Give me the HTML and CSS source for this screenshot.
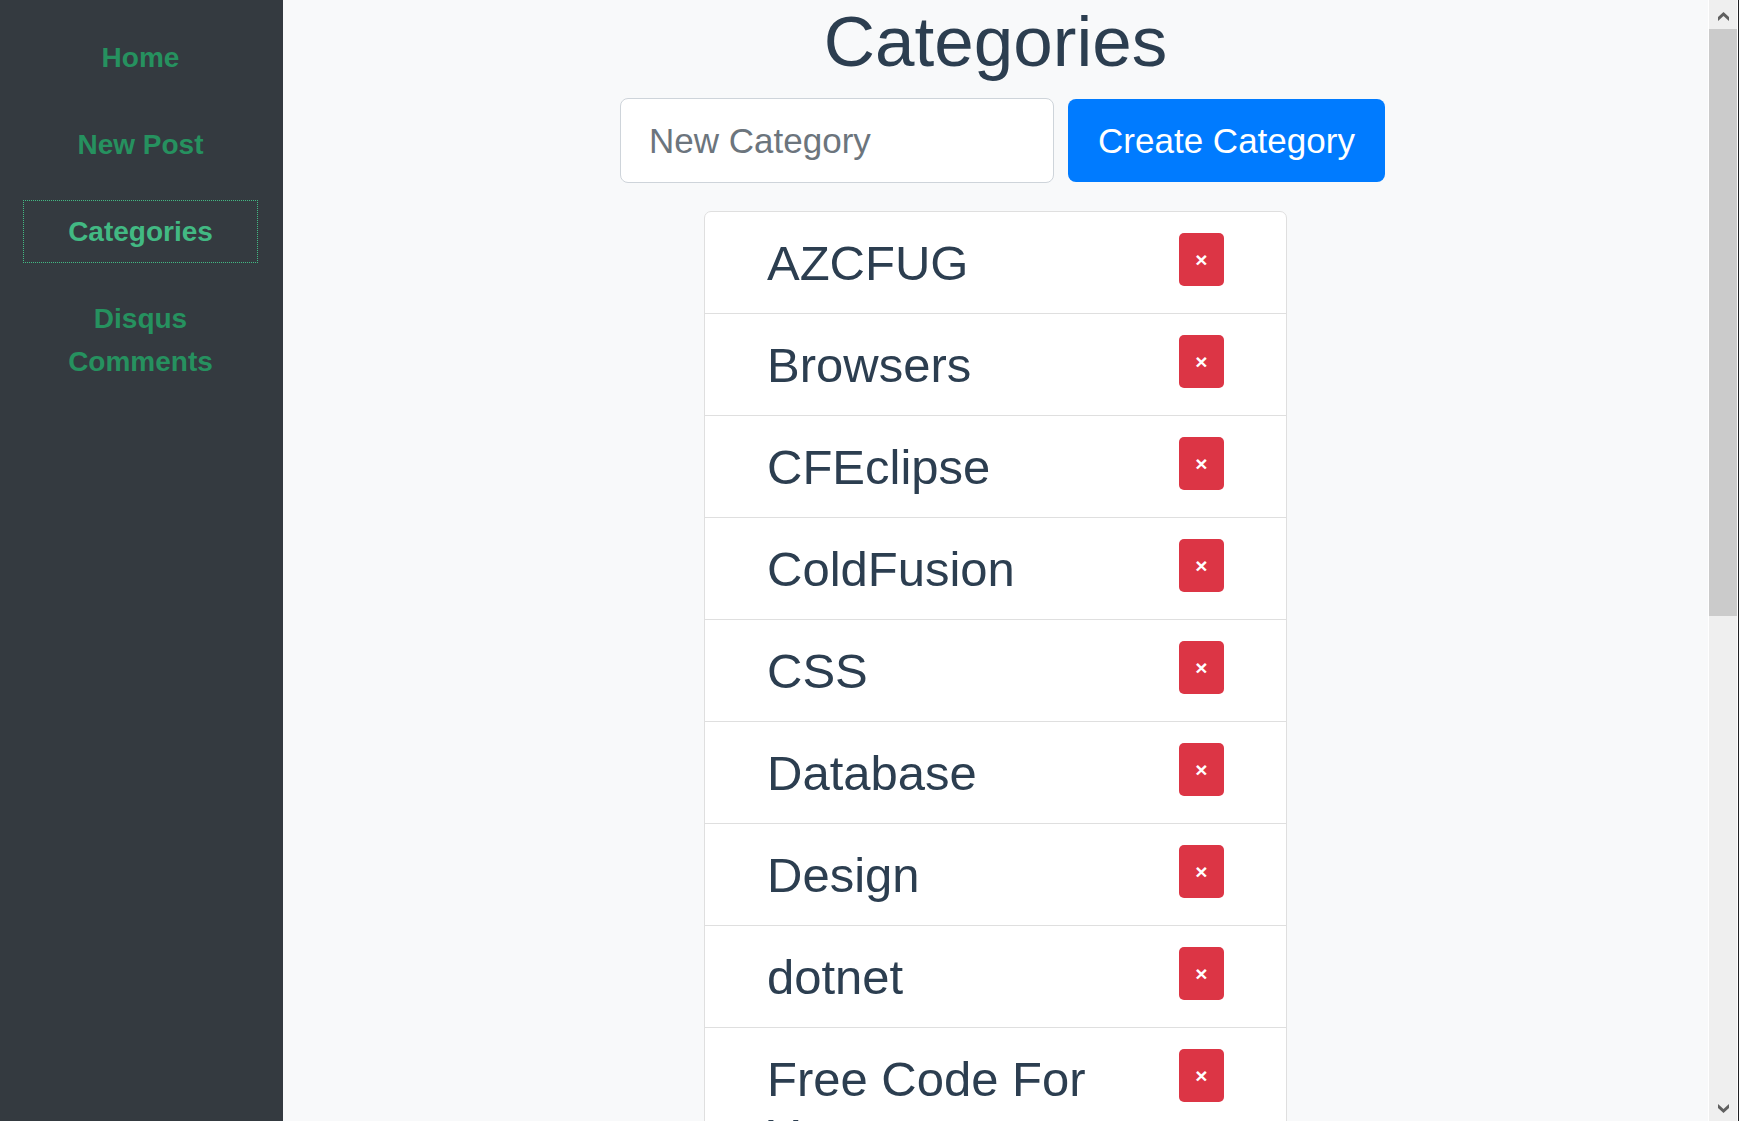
FILE: index.html
```html
<!DOCTYPE html>
<html lang="en">
<head>
<meta charset="utf-8">
<meta name="viewport" content="width=device-width, initial-scale=1">
<title>Categories</title>
<link rel="stylesheet" href="styles.css">
</head>
<body>
<div class="app">
  <nav class="sidebar" aria-label="Main">
    <a class="nav-link" href="#home">Home</a>
    <a class="nav-link" href="#new-post">New Post</a>
    <a class="nav-link active" href="#categories" aria-current="page">Categories</a>
    <a class="nav-link" href="#disqus">Disqus Comments</a>
  </nav>
  <main class="content">
    <h1 class="title">Categories</h1>
    <form class="create-form">
      <input class="field" type="text" placeholder="New Category" aria-label="New Category">
      <button class="btn-create" type="submit">Create Category</button>
    </form>
    <ul class="list">
      <li class="item"><h3 class="name">AZCFUG</h3><button class="btn-delete" type="button" aria-label="Delete AZCFUG">×</button></li>
      <li class="item"><h3 class="name">Browsers</h3><button class="btn-delete" type="button" aria-label="Delete Browsers">×</button></li>
      <li class="item"><h3 class="name">CFEclipse</h3><button class="btn-delete" type="button" aria-label="Delete CFEclipse">×</button></li>
      <li class="item"><h3 class="name">ColdFusion</h3><button class="btn-delete" type="button" aria-label="Delete ColdFusion">×</button></li>
      <li class="item"><h3 class="name">CSS</h3><button class="btn-delete" type="button" aria-label="Delete CSS">×</button></li>
      <li class="item"><h3 class="name">Database</h3><button class="btn-delete" type="button" aria-label="Delete Database">×</button></li>
      <li class="item"><h3 class="name">Design</h3><button class="btn-delete" type="button" aria-label="Delete Design">×</button></li>
      <li class="item"><h3 class="name">dotnet</h3><button class="btn-delete" type="button" aria-label="Delete dotnet">×</button></li>
      <li class="item"><h3 class="name">Free Code For You</h3><button class="btn-delete" type="button" aria-label="Delete Free Code For You">×</button></li>
    </ul>
  </main>
  <div class="scrollbar" aria-hidden="true">
    <div class="scroll-arrow"><svg width="11" height="9" viewBox="0 0 11 9"><path d="M0 5 5.500 0 11 5V9L5.500 4 0 9Z"/></svg></div>
    <div class="scroll-track"><div class="scroll-thumb"></div></div>
    <div class="scroll-arrow"><svg width="11" height="9" viewBox="0 0 11 9"><path d="M0 4 5.500 9 11 4V0L5.500 5 0 0Z"/></svg></div>
  </div>
</div>
</body>
</html>
```
FILE: styles.css
```css
* { box-sizing: border-box; }

body {
  margin: 0;
  font-family: "Liberation Sans", Arial, sans-serif;
  color: #2c3e50;
  background: #f8f9fa;
}

.app {
  display: flex;
  height: 100vh;
  overflow: hidden;
}

/* Sidebar */
.sidebar {
  flex: 0 0 283px;
  display: flex;
  flex-direction: column;
  gap: 24px;
  padding: 26px 25px 26px 23px;
  background: #343a40;
}

.nav-link {
  padding: 9px 28px;
  border: 1px solid transparent;
  font-size: 28px;
  line-height: 43px;
  font-weight: 700;
  text-align: center;
  text-decoration: none;
  color: #26915f;
}

.nav-link.active {
  color: #42b983;
  border: 1px dotted #42b983;
}

/* Content */
.content {
  flex: 1;
  min-width: 0;
  display: flex;
  flex-direction: column;
  align-items: center;
  background: #f8f9fa;
  overflow: hidden;
}

.title {
  margin: 0 0 14px;
  font-size: 71px;
  line-height: 84px;
  font-weight: 400;
}

.create-form {
  display: flex;
  align-items: center;
  gap: 14px;
  padding-left: 14px;
  margin-bottom: 28px;
}

.field {
  width: 434px;
  height: 85px;
  padding: 0 28px;
  border: 1px solid #ced4da;
  border-radius: 8px;
  background: #fff;
  font: 35px/54px "Liberation Sans", Arial, sans-serif;
  color: #495057;
}

.field::placeholder {
  color: #6c757d;
  opacity: 1;
}

.btn-create {
  height: 83px;
  padding: 0 30px;
  border: 0;
  border-radius: 8px;
  background: #007bff;
  color: #fff;
  font: 35px/54px "Liberation Sans", Arial, sans-serif;
}

.list {
  flex: none;
  width: 583px;
  max-width: 100%;
  margin: 0;
  padding: 0;
  list-style: none;
  border: 1px solid #dfdfdf;
  border-radius: 7px;
  background: #fff;
}

.item {
  display: flex;
  align-items: flex-start;
  justify-content: space-between;
  gap: 28px;
  padding: 21px 62px;
  border-bottom: 1px solid #dfdfdf;
}

.name {
  margin: 0;
  padding-top: 2px;
  font-size: 49px;
  line-height: 57px;
  font-weight: 400;
}

.btn-delete {
  flex: none;
  width: 45px;
  height: 53px;
  padding: 0;
  border: 0;
  border-radius: 5px;
  background: #dc3545;
  color: #fff;
  font: 700 21px/33px "Liberation Sans", Arial, sans-serif;
}

/* Scrollbar */
.scrollbar {
  flex: 0 0 31px;
  display: flex;
  flex-direction: column;
  border-left: 1px solid #fff;
  border-right: 1px solid #202124;
  background: #efefef;
  box-shadow: inset -1px 0 #fff;
}

.scroll-arrow {
  flex: 0 0 29px;
  display: flex;
  align-items: center;
  justify-content: center;
  padding-top: 3px;
}

.scroll-arrow svg { fill: #606060; }

.scroll-track { flex: 1; }

.scroll-thumb {
  height: 55.2%;
  margin-right: 1px;
  background: #cbcbcb;
}
```
